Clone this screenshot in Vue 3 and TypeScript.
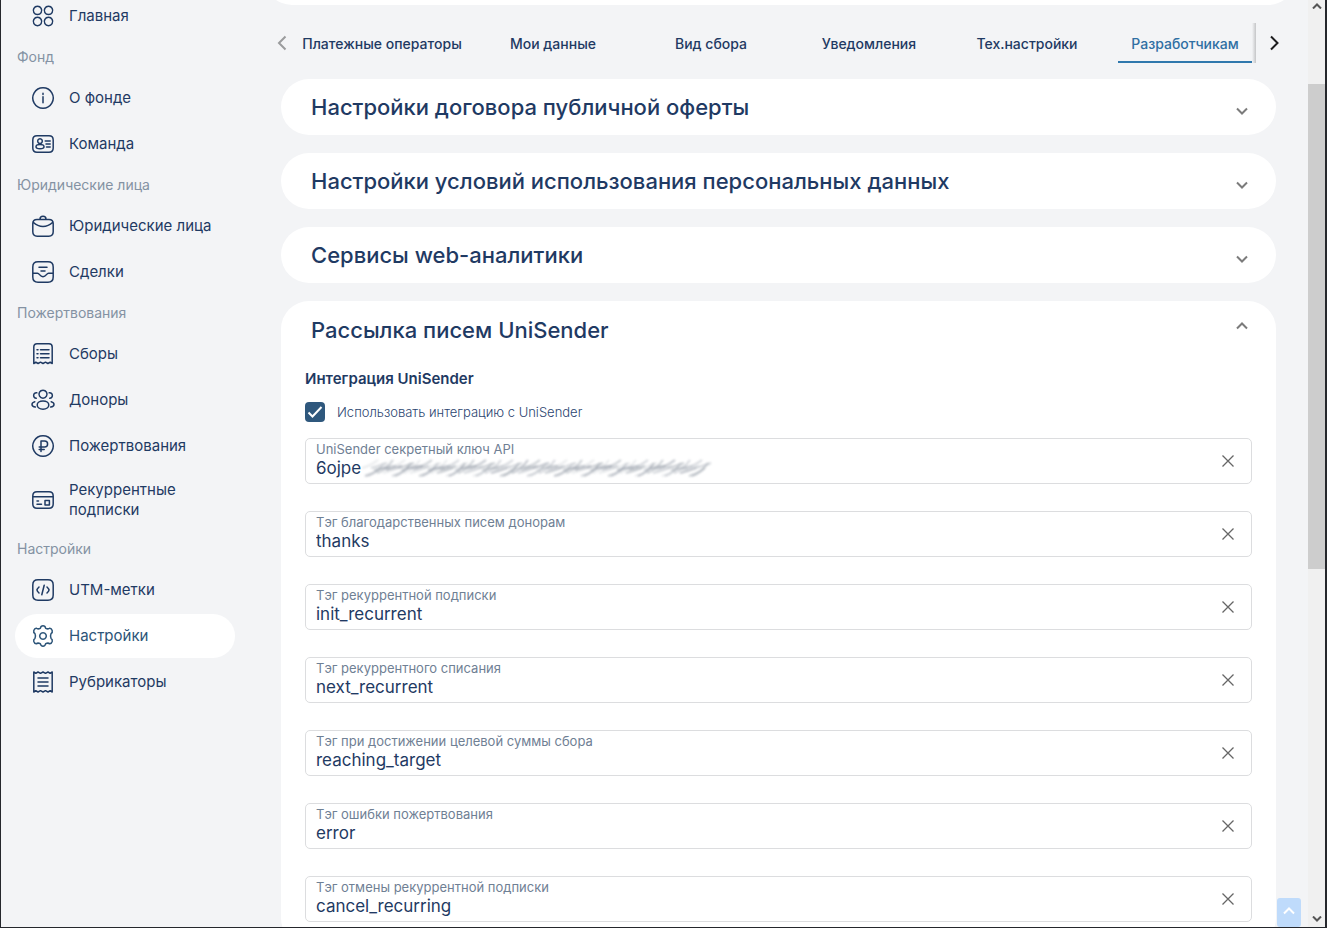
<script setup lang="ts">
import { ref } from 'vue'

interface Item { label: string; icon: string; active?: boolean }
interface Group { title?: string; items: Item[] }
interface Field { id: string; label: string; value: string; masked?: boolean }

const groups: Group[] = [
  { items: [{ label: 'Главная', icon: 'grid' }] },
  { title: 'Фонд', items: [{ label: 'О фонде', icon: 'info' }, { label: 'Команда', icon: 'team' }] },
  { title: 'Юридические лица', items: [{ label: 'Юридические лица', icon: 'bag' }, { label: 'Сделки', icon: 'inbox' }] },
  {
    title: 'Пожертвования',
    items: [
      { label: 'Сборы', icon: 'list' },
      { label: 'Доноры', icon: 'people' },
      { label: 'Пожертвования', icon: 'ruble' },
      { label: 'Рекуррентные подписки', icon: 'card' },
    ],
  },
  {
    title: 'Настройки',
    items: [
      { label: 'UTM-метки', icon: 'code' },
      { label: 'Настройки', icon: 'gear', active: true },
      { label: 'Рубрикаторы', icon: 'receipt' },
    ],
  },
]

const icons: Record<string, string> = {
  grid: 'M6.5 2.2a4.2 4.2 0 1 0 .01 0zM17.5 2.2a4.2 4.2 0 1 0 .01 0zM6.5 13.3a4.2 4.2 0 1 0 .01 0zM17.5 13.3a4.2 4.2 0 1 0 .01 0z',
  info: 'M12 1.8a10.2 10.2 0 1 0 .01 0zM12 10.8v6M12 7.2v1.2',
  team: 'M6 3.8h12q4.2 0 4.2 4.2v8q0 4.2-4.2 4.2H6q-4.2 0-4.2-4.2V8q0-4.2 4.2-4.2zM9 6.8a2.3 2.3 0 1 0 .01 0zM9 12.6c-2.4 0-4 .9-4 2.2s1.6 2 4 2 4-.7 4-2-1.6-2.2-4-2.2zM14.2 9h5M15 12h4.2M15.5 15h3.7',
  bag: 'M6 5.4h12q4.2 0 4.2 4.2v8.2q0 4.4-4.4 4.4H6.2q-4.4 0-4.4-4.4V9.6q0-4.2 4.2-4.2zM2.2 8.2c6 5.6 13.6 5.6 19.6 0M9 5.2q0-3 3-3t3 3',
  inbox: 'M7 1.8h10q5.2 0 5.2 5.2v10q0 5.2-5.2 5.2H7q-5.2 0-5.2-5.2V7q0-5.2 5.2-5.2zM2 13.2h4.5c2 0 2.3 3.5 5.5 3.5s3.5-3.5 5.5-3.5H22M8 7.2h8M10 11h4',
  list: 'M2.8 21.5V5q0-3.2 3.2-3.2h12q3.2 0 3.2 3.2v16.5l-2-1.3-2.3 1.3-2.4-1.3-2.5 1.3-2.5-1.3-2.4 1.3-2.3-1.3zM9.5 7.8H18M9.5 11.8H18M9.5 15.8H18M6 7.8h1M6 11.8h1M6 15.8h1',
  people: 'M12 2.2a4 4 0 1 0 .01 0zM12 13c-3.4 0-5.8 1.7-5.8 4s2.4 4.2 5.8 4.2 5.8-1.9 5.8-4.2-2.4-4-5.8-4zM5.8 4.8c-3.8-.6-4.4 5.2-.5 5.5M18.2 4.8c3.8-.6 4.4 5.2.5 5.5M3.8 13.8c-4 1.2-3.6 4.6.5 5.3M20.2 13.8c4 1.2 3.6 4.6-.5 5.3',
  ruble: 'M12 1.8a10.2 10.2 0 1 0 .01 0zM10 17.5V7h3.6a3 3 0 0 1 0 6H8.2M8.2 15.5h5',
  card: 'M6 3.8h12q4.2 0 4.2 4.2v8q0 4.2-4.2 4.2H6q-4.2 0-4.2-4.2V8q0-4.2 4.2-4.2zM2 8.8h20M6 13h1.5M6 16.2h4.5M14 12.5h4.4v4.4H14z',
  code: 'M7 1.8h10q5.2 0 5.2 5.2v10q0 5.2-5.2 5.2H7q-5.2 0-5.2-5.2V7q0-5.2 5.2-5.2zM8 9c-2.7 2.7-2.7 3.3 0 6M16 9c2.7 2.7 2.7 3.3 0 6M13.2 7.2l-2.4 9.6',
  gear: 'M9.3 4.3Q9.8 1.8 12 1.8t2.7 2.5q2.4 1.2 4.2-.1 1.5 0 2.3 2.3.6 2-1.2 3.2-1 2.3 0 4.6 1.8 1.2 1.2 3.2-.8 2.3-2.3 2.3-1.8-1.3-4.2-.1-.5 2.5-2.7 2.5t-2.7-2.5q-2.4-1.2-4.2.1-1.5 0-2.3-2.3-.6-2 1.2-3.2 1-2.3 0-4.6-1.8-1.2-1.2-3.2.8-2.3 2.3-2.3 1.8 1.3 4.2.1zM12 8.7a3.3 3.3 0 1 0 .01 0z',
  receipt: 'M2.8 2l2 1.3L7 2l2.5 1.3L12 2l2.5 1.3L17 2l2.2 1.3 2-1.3v20l-2-1.3L17 22l-2.5-1.3L12 22l-2.5-1.3L7 22l-2.2-1.3-2 1.3zM7 8h10M7 12h10M7 16h10',
}

const tabs = ['Платежные операторы', 'Мои данные', 'Вид сбора', 'Уведомления', 'Тех.настройки', 'Разработчикам']
const activeTab = ref('Разработчикам')
const closedPanels = [
  'Настройки договора публичной оферты',
  'Настройки условий использования персональных данных',
  'Сервисы web-аналитики',
]
const integration = ref(true)
const fields = ref<Field[]>([
  { id: 'key', label: 'UniSender секретный ключ API', value: '6ojpe', masked: true },
  { id: 'thanks', label: 'Тэг благодарственных писем донорам', value: 'thanks' },
  { id: 'init', label: 'Тэг рекуррентной подписки', value: 'init_recurrent' },
  { id: 'next', label: 'Тэг рекуррентного списания', value: 'next_recurrent' },
  { id: 'target', label: 'Тэг при достижении целевой суммы сбора', value: 'reaching_target' },
  { id: 'error', label: 'Тэг ошибки пожертвования', value: 'error' },
  { id: 'cancel', label: 'Тэг отмены рекуррентной подписки', value: 'cancel_recurring' },
])

// Slanted strokes of uneven weight that hide the tail of the secret key
const strokes = Array.from({ length: 112 }, (_, i) => {
  const x = i * 3
  const top = 2 + ((i * i * 7 + i) % 9)
  const bottom = 10 + ((i * i * 5 + i * 3) % 9)
  return {
    d: `M${x} ${bottom}Q${x + 8} ${bottom - 2} ${x + 16} ${top}`,
    opacity: 0.2 + ((i * i * 3 + i) % 7) * 0.09,
  }
})
</script>

<template>
  <div class="app">
    <aside class="sidebar">
      <nav>
        <section v-for="(g, gi) in groups" :key="gi" class="group">
          <h2 v-if="g.title" class="group-title">{{ g.title }}</h2>
          <a v-for="it in g.items" :key="it.label" href="#" class="item" :class="{ active: it.active }">
            <svg class="item-icon" viewBox="0 0 24 24" aria-hidden="true"><path :d="icons[it.icon]" /></svg>
            <span>{{ it.label }}</span>
          </a>
        </section>
      </nav>
    </aside>

    <main class="content">
      <div class="top-card"></div>
      <div class="tabs">
        <button class="tab-arrow prev" aria-label="Назад">
          <svg viewBox="0 0 16 16" aria-hidden="true"><path d="M11.5 1.5L5 8l6.5 6.5" /></svg>
        </button>
        <div class="tab-list" role="tablist">
          <button
            v-for="t in tabs"
            :key="t"
            class="tab"
            role="tab"
            :aria-selected="t === activeTab"
            @click="activeTab = t"
          >{{ t }}</button>
        </div>
        <button class="tab-arrow next" aria-label="Вперёд">
          <svg viewBox="0 0 16 16" aria-hidden="true"><path d="M5 1.5L11.5 8 5 14.5" /></svg>
        </button>
      </div>

      <div class="panels">
        <section v-for="p in closedPanels" :key="p" class="panel">
          <button class="panel-head" aria-expanded="false">
            <span>{{ p }}</span>
            <svg class="chevron" viewBox="0 0 12 8" aria-hidden="true"><path d="M1 1.5l5 5 5-5" /></svg>
          </button>
        </section>

        <section class="panel open">
          <button class="panel-head" aria-expanded="true">
            <span>Рассылка писем UniSender</span>
            <svg class="chevron" viewBox="0 0 12 8" aria-hidden="true"><path d="M1 6.5l5-5 5 5" /></svg>
          </button>
          <div class="panel-body">
            <h3 class="sub">Интеграция UniSender</h3>
            <label class="check">
              <input v-model="integration" type="checkbox" />
              <svg v-if="integration" class="tick" viewBox="0 0 20 20" aria-hidden="true"><path d="M3.5 10.5l4 4 9-9.5" /></svg>
              <span>Использовать интеграцию с UniSender</span>
            </label>
            <div class="fields">
              <div v-for="f in fields" :key="f.id" class="field">
                <div class="field-text">
                  <label :for="f.id">{{ f.label }}</label>
                  <input :id="f.id" v-model="f.value" type="text" />
                  <svg v-if="f.masked" class="mask" viewBox="0 0 352 20" aria-hidden="true">
                    <path v-for="s in strokes" :key="s.d" :d="s.d" :opacity="s.opacity" />
                  </svg>
                </div>
                <button class="clear" aria-label="Очистить" @click="f.value = ''">
                  <svg viewBox="0 0 12 12" aria-hidden="true"><path d="M.5.5l11 11M11.5.5l-11 11" /></svg>
                </button>
              </div>
            </div>
          </div>
        </section>
      </div>
      <button class="to-top" aria-label="Наверх">
        <svg viewBox="0 0 12 8" aria-hidden="true"><path d="M1 6.5l5-5 5 5" /></svg>
      </button>
    </main>

    <div class="scrollbar" aria-hidden="true">
      <svg viewBox="0 0 10 6"><path d="M1 5.5l4-4 4 4" /></svg>
      <div class="track"><div class="thumb"></div></div>
      <svg viewBox="0 0 10 6"><path d="M1 .5l4 4 4-4" /></svg>
    </div>
  </div>
</template>

<style>
body { overflow: hidden; }
</style>

<style scoped>
* { box-sizing: border-box; }
.app {
  display: flex;
  height: 100vh;
  overflow: hidden;
  background: #f3f4f6;
  border: solid #25272c;
  border-width: 0 2px 1px 1px;
  color: #1f3a63;
  font-family: Inter, "Noto Sans", sans-serif;
}
button { border: 0; padding: 0; background: none; font: inherit; color: inherit; cursor: pointer; }
svg { display: block; fill: none; stroke: currentColor; }

.sidebar { flex: 0 0 259px; padding-left: 14px; }
.sidebar nav { margin-top: -6px; width: 220px; }
.group-title {
  margin: 0;
  padding-left: 2px;
  font-size: 14px;
  line-height: 38px;
  font-weight: 400;
  color: #8492a3;
}
.item {
  display: flex;
  align-items: center;
  gap: 14px;
  min-height: 44px;
  padding: 10px 16px;
  border-radius: 22px;
  font-size: 15px;
  line-height: 20px;
  color: inherit;
  text-decoration: none;
}
.item + .item { margin-top: 2px; }
.item.active { background: #fff; color: #2c5478; }
.item-icon { flex: none; width: 24px; height: 24px; stroke-width: 1.5; stroke-linecap: round; stroke-linejoin: round; }

.content { position: relative; flex: 1; min-width: 0; }
.top-card { height: 56px; margin: -51px 12px 0 4px; border-radius: 28px; background: #fff; }
.tabs { display: flex; height: 40px; margin: 18px 21px 0 14px; }
.tab-list { position: relative; display: flex; flex: 1; min-width: 0; overflow: hidden; }
.tab-list::after {
  content: "";
  position: absolute;
  top: 0;
  right: 0;
  bottom: 0;
  width: 4px;
  background: linear-gradient(to right, transparent, #c4c5c7);
}
.tab {
  flex: 0 0 134px;
  margin: 0 12px;
  font-size: 14px;
  font-weight: 500;
  white-space: nowrap;
  border-bottom: 2px solid transparent;
  border-top: 2px solid transparent;
}
.tab:first-child { flex-basis: 160px; }
.tab[aria-selected="true"] { color: #2f6fa3; border-bottom-color: #2f78ad; }
.tab-arrow { display: flex; align-items: center; flex: none; width: 16px; }
.tab-arrow svg { width: 16px; height: 16px; stroke-width: 2; }
.prev { color: #9a9b9d; }
.next { width: 31px; padding-left: 10px; color: #1c1c1e; }

.panels { display: flex; flex-direction: column; gap: 18px; margin: 16px 32px 0 21px; }
.panel { border-radius: 28px; background: #fff; }
.panel-head {
  display: flex;
  align-items: center;
  justify-content: space-between;
  width: 100%;
  height: 56px;
  padding: 0 28px 0 30px;
  font-size: 22px;
  line-height: 28px;
  font-weight: 500;
  text-align: left;
}
.chevron { width: 12px; height: 8px; margin-top: 8px; stroke: #7b7b7b; stroke-width: 2; }
.open .panel-head { height: 58px; }
.open .chevron { margin: 0 0 8px; }
.panel-body { padding: 10px 24px 24px; }
.sub { margin: 0; font-size: 15px; line-height: 20px; font-weight: 600; }
.check { position: relative; display: flex; align-items: center; gap: 12px; height: 20px; margin-top: 13px; font-size: 13px; font-weight: 300; color: #2b4570; }
.check input { appearance: none; flex: none; width: 20px; height: 20px; margin: 0; border-radius: 4px; background: #2f587d; }
.tick { position: absolute; left: 0; top: 0; width: 20px; height: 20px; color: #fff; stroke-width: 2; }
.fields { display: flex; flex-direction: column; gap: 27px; margin-top: 16px; }
.field { display: flex; align-items: center; height: 46px; padding: 0 17px 4px 10px; border: 1px solid #dcdddf; border-radius: 5px; }
.field-text { position: relative; display: flex; flex: 1; flex-direction: column; }
.field-text label { font-size: 13px; line-height: 18px; color: #6f8094; }
.field-text input { width: 100%; height: 20px; padding: 0; border: 0; outline: 0; background: none; color: inherit; font: 17px/20px Inter, "Noto Sans", sans-serif; }
.mask { position: absolute; left: 46px; top: 18px; width: 352px; height: 20px; filter: blur(1px); stroke: #8e96a2; stroke-width: 2; }
.clear { display: flex; align-items: center; padding-top: 4px; color: #666; }
.clear svg { width: 12px; height: 12px; stroke-width: 1.3; }

.to-top {
  position: absolute;
  right: 7px;
  bottom: 0;
  display: grid;
  place-items: center;
  width: 24px;
  height: 29px;
  padding-bottom: 4px;
  border-radius: 3px;
  background: #bfdbfb;
  color: #fff;
}
.to-top svg { width: 12px; height: 8px; stroke-width: 2; }
.scrollbar { display: flex; flex-direction: column; align-items: center; flex: 0 0 17px; padding: 3px 0 5px; background: #f0f0f0; color: #555; }
.scrollbar > svg { width: 10px; height: 6px; stroke-width: 2; }
.track { flex: 1; width: 100%; padding: 75px 0 347px; }
.thumb { height: 100%; background: #cdcdcd; }
</style>
